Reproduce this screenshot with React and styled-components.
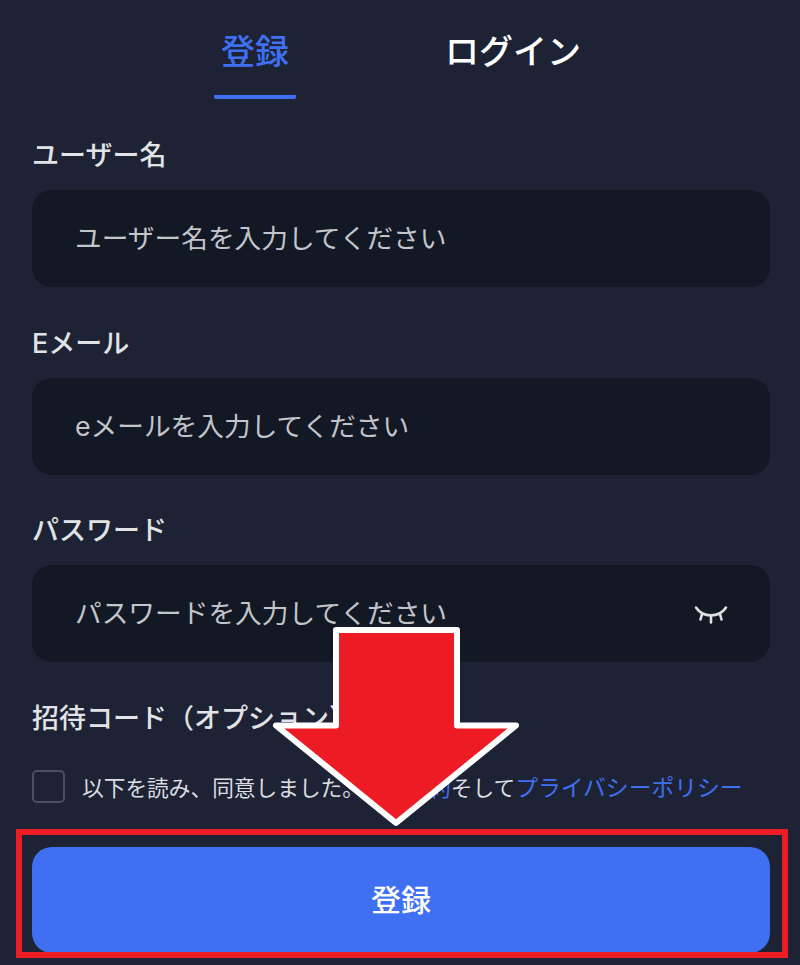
import React from "react";
import styled, { createGlobalStyle } from "styled-components";

const Global = createGlobalStyle`
  html, body { margin: 0; padding: 0; background: #1d2334; }
  * { box-sizing: border-box; }
`;

const Page = styled.div`
  position: relative;
  width: 800px;
  height: 965px;
  overflow: hidden;
  background: #1d2334;
  padding: 0 30px 0 32px;
  font-family: "Inter", "Noto Sans CJK JP", sans-serif;
  color: #e4e5e8;
`;

const Tabs = styled.div`
  display: flex;
  height: 99px;
  margin: 0 0 38px 182px;
  gap: 149px;
`;

const Tab = styled.div`
  width: ${(p) => (p.$active ? "82px" : "136px")};
  height: 99px;
  padding-top: 27px;
  text-align: center;
  font-size: 34px;
  line-height: 50px;
  font-weight: 500;
  color: ${(p) => (p.$active ? "#3f70f1" : "#ffffff")};
  border-bottom: 4px solid ${(p) => (p.$active ? "#3f70f1" : "transparent")};
  border-radius: 0 0 2px 2px;
`;

const Field = styled.div`
  margin-bottom: 37.5px;
`;

const Label = styled.div`
  height: 36px;
  padding-top: 1px;
  line-height: 36px;
  font-size: 27px;
  font-weight: 500;
  color: #e2e3e6;
  margin-bottom: 17px;
`;

const InputBox = styled.div`
  display: flex;
  align-items: center;
  justify-content: space-between;
  height: 97px;
  padding: 0 42px 4px 43px;
  background: #131825;
  border-radius: 20px;
`;

const Placeholder = styled.span`
  font-size: 26.7px;
  color: #c3c5ca;
`;

const InviteLabel = styled(Label)`
  margin-bottom: 0;
`;

const AgreeRow = styled.div`
  display: flex;
  align-items: center;
  gap: 17px;
  height: 34px;
  margin-top: 34px;
  white-space: nowrap;
`;

const Check = styled.span`
  flex: none;
  width: 33px;
  height: 33px;
  border: 2px solid #4b5060;
  border-radius: 5px;
`;

const AgreeText = styled.span`
  font-size: 21.7px;
  color: #dcdde1;
`;

const Link = styled.span`
  font-size: ${(p) => (p.$large ? "22.8px" : "inherit")};
  color: #3f70f1;
`;

const Submit = styled.button`
  display: block;
  width: 738px;
  height: 106px;
  margin-top: 43px;
  padding: 0 0 4px;
  border: 0;
  border-radius: 20px;
  background: #3f70f1;
  color: #fff;
  font-family: inherit;
  font-size: 30px;
  font-weight: 500;
`;

const Highlight = styled.div`
  position: absolute;
  left: 16px;
  top: 829px;
  width: 772px;
  height: 129px;
  border: 6px solid #ed1c24;
  pointer-events: none;
`;

const ArrowMark = styled.svg`
  position: absolute;
  left: 262px;
  top: 620px;
`;

const EyeMark = styled.svg`
  display: block;
  flex: none;
  margin-top: 9px;
`;

export default function App() {
  return (
    <Page>
      <Global />
      <Tabs>
        <Tab $active>登録</Tab>
        <Tab>ログイン</Tab>
      </Tabs>
      <Field>
        <Label>ユーザー名</Label>
        <InputBox>
          <Placeholder>ユーザー名を入力してください</Placeholder>
        </InputBox>
      </Field>
      <Field>
        <Label>Eメール</Label>
        <InputBox>
          <Placeholder>eメールを入力してください</Placeholder>
        </InputBox>
      </Field>
      <Field>
        <Label>パスワード</Label>
        <InputBox>
          <Placeholder>パスワードを入力してください</Placeholder>
          <EyeMark width="34" height="22" viewBox="0 0 34 22" fill="none" stroke="#dfe0e3" strokeWidth="2.6" strokeLinecap="round">
            <path d="M2 2.5 C9 13 25 13 32 2.5" />
            <path d="M8 9 L6.5 14.5 M17 11 V17.5 M26 9 L27.5 14.5" />
          </EyeMark>
        </InputBox>
      </Field>
      <InviteLabel>招待コード（オプション）</InviteLabel>
      <AgreeRow>
        <Check />
        <AgreeText>
          以下を読み、同意しました。<Link>利用規約</Link>そして<Link $large>プライバシーポリシー</Link>
        </AgreeText>
      </AgreeRow>
      <Submit>登録</Submit>
      <Highlight />
      <ArrowMark width="268" height="216" viewBox="0 0 268 216">
        <path
          d="M74 10 H195 V105.5 H254 L134 203 L14 105.5 H74 Z"
          fill="#ed1c24"
          stroke="#ffffff"
          strokeWidth="6"
          strokeLinejoin="round"
        />
      </ArrowMark>
    </Page>
  );
}
